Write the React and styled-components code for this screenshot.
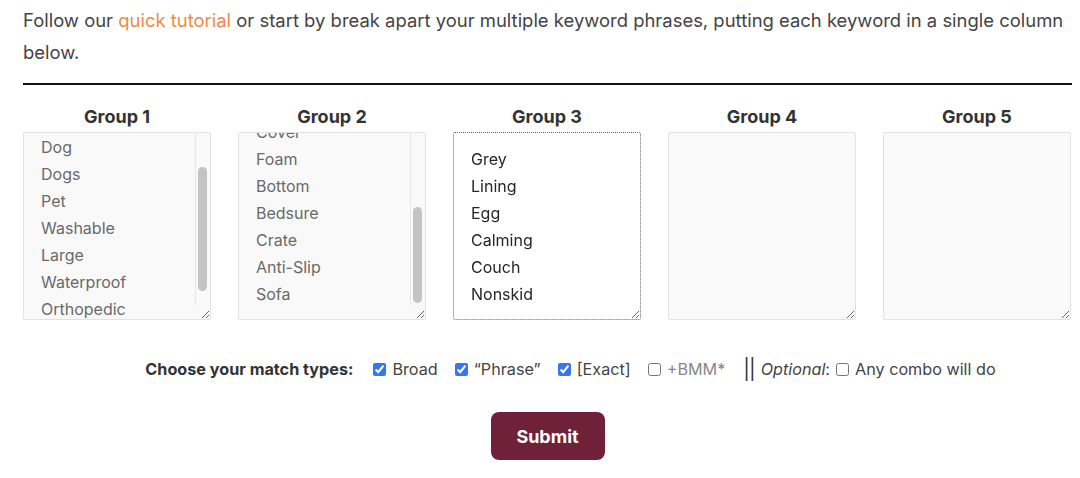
import React, { useEffect, useRef } from "react";
import styled, { createGlobalStyle } from "styled-components";

const Global = createGlobalStyle`
  html, body { margin: 0; padding: 0; background: #fff; }
  body { font-family: Inter, "Noto Sans", "Liberation Sans", sans-serif; color: #444; }
`;

const Page = styled.div`
  width: 1049px;
  padding: 4px 8px 0 23px;
`;

const Intro = styled.p`
  margin: 0;
  font-size: 18.45px;
  line-height: 32px;
  color: #444;
`;

const Link = styled.a`
  color: #ef8a44;
  text-decoration: none;
`;

const Rule = styled.hr`
  margin: 15px 0 0;
  border: 0;
  height: 2px;
  background: #111;
`;

const Groups = styled.div`
  display: grid;
  grid-template-columns: repeat(5, 188px);
  column-gap: 27px;
  margin-top: 20px;
`;

const Column = styled.div`
  display: flex;
  flex-direction: column;
  align-items: center;
`;

const Heading = styled.h3`
  margin: 0 0 3px;
  font-size: 18px;
  line-height: 24px;
  font-weight: 700;
  color: #333;
`;

const Field = styled.div`
  position: relative;
  width: 188px;
  height: 188px;
`;

const Area = styled.textarea`
  display: block;
  box-sizing: border-box;
  width: 188px;
  height: 188px;
  margin: 0;
  padding: 13px 17px 11px;
  font-family: Inter, "Noto Sans", "Liberation Sans", sans-serif;
  font-size: 16px;
  line-height: 27px;
  color: ${(p) => (p.$active ? "#262626" : "#6a6a6a")};
  background: ${(p) => (p.$active ? "#fff" : "#f9f9f9")};
  border: 1px ${(p) => (p.$active ? "dotted #666" : "solid #e2e2e2")};
  border-radius: 2px;
  outline: none;
  overflow-y: auto;
  scrollbar-width: none;
  &::-webkit-scrollbar { display: none; }
`;

const Track = styled.div`
  position: absolute;
  top: 1px;
  right: 1px;
  bottom: 15px;
  width: 14px;
  border-left: 1px solid #e6e6e6;
  background: #f9f9f9;
  pointer-events: none;
`;

const Thumb = styled.div`
  position: absolute;
  left: 2px;
  width: 9px;
  border-radius: 5px;
  background: #c4c4c4;
`;

const Options = styled.div`
  display: flex;
  justify-content: center;
  align-items: center;
  margin-top: 37px;
  padding-left: 46px;
  font-size: 16.2px;
  line-height: 24px;
  color: #444;
`;

const Label = styled.span`
  font-weight: 700;
  color: #333;
  margin-right: 20px;
`;

const Choice = styled.label`
  display: inline-flex;
  align-items: center;
  gap: 6px;
  margin-left: ${(p) => p.$lead ?? 0}px;
  margin-right: ${(p) => p.$gap ?? 17}px;
  color: ${(p) => (p.$muted ? "#888" : "#444")};
`;

const Box = styled.input`
  width: 13px;
  height: 13px;
  margin: 0;
  accent-color: #3378f0;
`;

const Sep = styled.span`
  margin: 0 6px 0 0;
  font-size: 20px;
  color: #333;
  letter-spacing: -1px;
`;

const Em = styled.em`
  color: #444;
`;

const Actions = styled.div`
  display: flex;
  justify-content: center;
  margin-top: 31px;
`;

const Submit = styled.button`
  width: 114px;
  height: 48px;
  border: 0;
  border-radius: 8px;
  background: #6e2139;
  color: #fff;
  font-family: Inter, "Noto Sans", "Liberation Sans", sans-serif;
  font-size: 18px;
  font-weight: 700;
  cursor: pointer;
`;

const groups = [
  { name: "Group 1", words: ["Bed", "Beds", "Dog", "Dogs", "Pet", "Washable", "Large", "Waterproof", "Orthopedic", "Memory"], scroll: 66, thumb: [34, 124] },
  { name: "Group 2", words: ["Mat", "Pad", "Cushion", "Kennel", "Pillow", "Cover", "Foam", "Bottom", "Bedsure", "Crate", "Anti-Slip", "Sofa"], scroll: 9999, thumb: [74, 96] },
  { name: "Group 3", words: ["Grey", "Lining", "Egg", "Calming", "Couch", "Nonskid"], active: true },
  { name: "Group 4", words: [] },
  { name: "Group 5", words: [] },
];

function GroupField({ g }) {
  const ref = useRef(null);
  useEffect(() => {
    if (ref.current && g.scroll) ref.current.scrollTop = g.scroll;
  }, [g.scroll]);
  return (
    <Column>
      <Heading>{g.name}</Heading>
      <Field>
        <Area ref={ref} $active={g.active} defaultValue={g.words.join("\n")} />
        {g.thumb && (
          <Track>
            <Thumb style={{ top: g.thumb[0], height: g.thumb[1] }} />
          </Track>
        )}
      </Field>
    </Column>
  );
}

export default function App() {
  return (
    <>
      <Global />
      <Page>
        <Intro>
          Follow our <Link href="#">quick tutorial</Link> or start by break apart your multiple keyword phrases, putting each keyword in a single column below.
        </Intro>
        <Rule />
        <Groups>
          {groups.map((g) => (
            <GroupField key={g.name} g={g} />
          ))}
        </Groups>
        <Options>
          <Label>Choose your match types:</Label>
          <Choice><Box type="checkbox" defaultChecked />Broad</Choice>
          <Choice><Box type="checkbox" defaultChecked />“Phrase”</Choice>
          <Choice><Box type="checkbox" defaultChecked />[Exact]</Choice>
          <Choice $muted $gap={18}><Box type="checkbox" />+BMM*</Choice>
          <Sep>||</Sep>
          <Em>Optional</Em>:
          <Choice $lead={6} $gap={0}><Box type="checkbox" />Any combo will do</Choice>
        </Options>
        <Actions>
          <Submit type="button">Submit</Submit>
        </Actions>
      </Page>
    </>
  );
}
